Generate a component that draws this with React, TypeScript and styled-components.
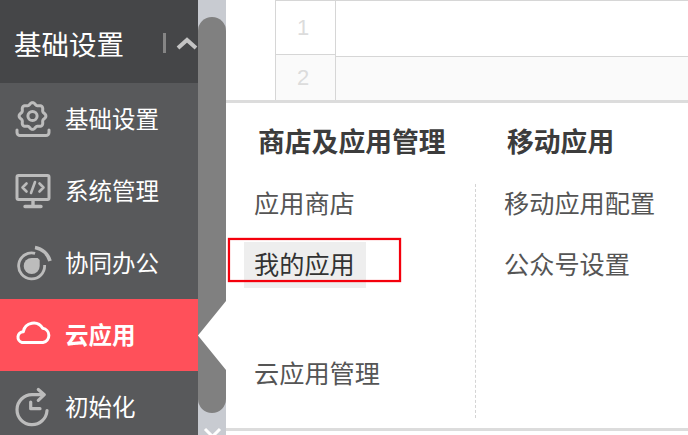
import React from 'react';
import styled, { createGlobalStyle } from 'styled-components';

const Global = createGlobalStyle`
  html, body { margin: 0; padding: 0; background: #fff; }
  body { font-family: "Noto Sans CJK SC", "Noto Sans", sans-serif; }
`;

const Page = styled.div`
  width: 688px;
  height: 435px;
  display: flex;
  overflow: hidden;
  background: #fff;
`;

const Sidebar = styled.aside`
  width: 198px;
  flex: none;
  background: #58595b;
  overflow: hidden;
`;

const SideHeader = styled.header`
  height: 83px;
  display: flex;
  align-items: center;
  padding: 3px 0 0 14px;
  box-sizing: border-box;
  background: #454648;
  color: #fff;
`;

const SideTitle = styled.div`
  font-size: 27.5px;
  line-height: 36px;
  margin-right: auto;
`;

const HeaderDivider = styled.span`
  width: 3px;
  height: 20px;
  background: #858585;
  margin-right: 10px;
`;

const Chevron = styled.svg`
  width: 22px;
  height: 14px;
  flex: none;
`;

const NavItem = styled.div<{ $active?: boolean }>`
  height: 72px;
  display: flex;
  align-items: center;
  gap: 14px;
  padding-left: 15px;
  box-sizing: border-box;
  background: ${(p) => (p.$active ? '#ff505a' : 'transparent')};
  color: #fff;
  font-size: 23.5px;
  font-weight: ${(p) => (p.$active ? 700 : 400)};
  svg { width: 36px; height: 36px; flex: none; overflow: visible; }
`;

const NavLabel = styled.span`
  padding-bottom: 3px;
`;

const Strip = styled.div`
  position: relative;
  width: 28px;
  flex: none;
  background: #c8cbd1;
  display: flex;
  flex-direction: column;
  align-items: center;
`;

const Thumb = styled.div`
  width: 28px;
  height: 396px;
  margin-top: 17px;
  border-radius: 14px;
  background: #808080;
  flex: none;
`;

const CloseMark = styled.svg`
  width: 19px;
  height: 19px;
  margin-top: 14px;
  flex: none;
`;

const Notch = styled.div`
  position: absolute;
  left: 0;
  top: 301px;
  width: 28px;
  height: 69px;
  background: #fff;
  clip-path: polygon(100% 0, 0 50%, 100% 100%);
`;

const Main = styled.main`
  position: relative;
  flex: 1;
  min-width: 0;
  display: flex;
  flex-direction: column;
`;

const TableArea = styled.section`
  height: 103px;
  flex: none;
  box-sizing: border-box;
  padding-left: 49px;
  border-bottom: 3px solid #dcdcdc;
  display: flex;
  overflow: hidden;
`;

const NumberColumn = styled.div`
  width: 61px;
  flex: none;
  box-sizing: border-box;
  border: solid #d6d6d6;
  border-width: 1px 1px 0 1px;
`;

const NumberCell = styled.div<{ $shaded?: boolean }>`
  height: ${(p) => (p.$shaded ? 46 : 53)}px;
  display: flex;
  align-items: center;
  justify-content: center;
  padding-right: 5px;
  font: 22px "Liberation Sans", Arial, sans-serif;
  color: #dcdcdc;
  background: ${(p) => (p.$shaded ? '#fafafa' : '#fff')};
  border-bottom: ${(p) => (p.$shaded ? 'none' : '1px solid #d6d6d6')};
`;

const ContentColumn = styled.div`
  flex: 1;
  border-top: 1px solid #d6d6d6;
`;

const ContentCell = styled.div<{ $shaded?: boolean }>`
  height: ${(p) => (p.$shaded ? 46 : 55)}px;
  background: ${(p) => (p.$shaded ? '#fafafa' : '#fff')};
  border-bottom: ${(p) => (p.$shaded ? 'none' : '1px solid #d6d6d6')};
`;

const Panel = styled.section`
  height: 325px;
  flex: none;
  display: flex;
  border-bottom: 3px solid #dcdcdc;
`;

const MenuColumn = styled.div<{ $width?: number }>`
  ${(p) => (p.$width ? `width: ${p.$width}px; flex: none;` : 'flex: 1;')}
  display: flex;
  flex-direction: column;
`;

const MenuHeading = styled.h3<{ $indent: number }>`
  margin: 18px 0 23px;
  padding-left: ${(p) => p.$indent}px;
  font-size: 26.8px;
  line-height: 40px;
  font-weight: 700;
  color: #3c3c3c;
`;

const MenuBody = styled.div<{ $divider?: boolean }>`
  height: 234px;
  display: flex;
  flex-direction: column;
  align-items: flex-start;
  gap: 21px;
  border-left: 1px ${(p) => (p.$divider ? 'dashed #d4d4d4' : 'solid transparent')};
`;

const MenuItem = styled.div<{ $selected?: boolean; $indent: number; $pushed?: boolean }>`
  font-size: 25.2px;
  line-height: 36px;
  padding-bottom: 4px;
  white-space: nowrap;
  color: ${(p) => (p.$selected ? '#333' : '#555')};
  margin-top: ${(p) => (p.$pushed ? '48px' : '0')};
  ${(p) =>
    p.$selected
      ? `background: #eee; padding: 3px 11px 7px 10px; margin-top: -3px; margin-bottom: -3px; margin-left: ${p.$indent - 10}px;`
      : `margin-left: ${p.$indent}px;`}
`;

const Callout = styled.div`
  position: absolute;
  left: 2px;
  top: 238px;
  width: 173px;
  height: 44px;
  box-sizing: border-box;
  border: 2px solid #f4000c;
  box-shadow: 0 0 1px #f4000c, inset 0 0 1px #f4000c;
`;

const ICON = '#bcbcbc';

const gearOutline = Array.from({ length: 96 }, (_, i) => {
  const t = (i / 96) * Math.PI * 2;
  const r = 12.3 + 1.1 * Math.cos(8 * t);
  return `${i === 0 ? 'M' : 'L'}${(17.5 + r * Math.sin(t)).toFixed(2)} ${(15 - r * Math.cos(t)).toFixed(2)}`;
}).join(' ') + 'Z';

const GearIcon = () => (
  <svg viewBox="0 0 36 36" fill="none" stroke={ICON} strokeWidth="3" strokeLinecap="round" strokeLinejoin="round">
    <path d={gearOutline} />
    <circle cx="17.5" cy="15" r="4.6" />
    <path d="M2 29v2.500a3 3 0 0 0 3 3h26a3 3 0 0 0 3-3V29" />
  </svg>
);

const CodeIcon = () => (
  <svg viewBox="0 0 36 36" fill="none" stroke={ICON} strokeWidth="3" strokeLinecap="round" strokeLinejoin="round">
    <rect x="2" y="2.500" width="32" height="24" rx="1.500" />
    <path d="M18 27v6M10 33.500h16" strokeWidth="3.400" />
    <path d="M11.500 10.500L7.500 14.500l4 4M24.500 10.500l4 4-4 4M20 9l-4 11" strokeWidth="2.600" />
  </svg>
);

const OrbitIcon = () => (
  <svg viewBox="0 0 36 36" fill="none" stroke={ICON}>
    <path d="M29.600 20A13 13 0 1 1 20.100 8.400" strokeWidth="2.800" />
    <path d="M20 2.500A18.500 18.500 0 0 1 35 16" strokeWidth="3.600" />
    <path d="M16.700 13h6l2 2v6a8 8 0 1 1-8-8z" fill={ICON} stroke="none" />
  </svg>
);

const CloudIcon = () => (
  <svg viewBox="0 0 36 36" fill="none" stroke="#fff" strokeWidth="3" strokeLinejoin="round">
    <path d="M7 25.500H28A7.200 7.200 0 0 0 27.700 11.300A10.500 10.500 0 0 0 8.300 14.700 5.500 5.500 0 0 0 7 25.500Z" />
  </svg>
);

const RefreshIcon = () => (
  <svg viewBox="0 0 36 36" fill="none" stroke={ICON} strokeWidth="3.200" strokeLinecap="round" strokeLinejoin="round">
    <path d="M28 5.700H17A15 15 0 1 0 32 21.500" />
    <path d="M23.300.5l6 5.200-6 5.600" />
    <path d="M15.700 13v6.700H25" />
  </svg>
);

const nav = [
  { label: '基础设置', icon: <GearIcon /> },
  { label: '系统管理', icon: <CodeIcon /> },
  { label: '协同办公', icon: <OrbitIcon /> },
  { label: '云应用', icon: <CloudIcon />, active: true },
  { label: '初始化', icon: <RefreshIcon /> },
];

export default function App() {
  return (
    <Page>
      <Global />
      <Sidebar>
        <SideHeader>
          <SideTitle>基础设置</SideTitle>
          <HeaderDivider />
          <Chevron viewBox="0 0 22 14" fill="none" stroke="#c4c4c4" strokeWidth="4">
            <path d="M2 12l9-8 9 8" />
          </Chevron>
        </SideHeader>
        {nav.map((n) => (
          <NavItem key={n.label} $active={n.active}>
            {n.icon}
            <NavLabel>{n.label}</NavLabel>
          </NavItem>
        ))}
      </Sidebar>
      <Strip>
        <Thumb />
        <CloseMark viewBox="0 0 19 19" stroke="#fff" strokeWidth="3" fill="none">
          <path d="M2 2l15 15M17 2L2 17" />
        </CloseMark>
        <Notch />
      </Strip>
      <Main>
        <TableArea>
          <NumberColumn>
            <NumberCell>1</NumberCell>
            <NumberCell $shaded>2</NumberCell>
          </NumberColumn>
          <ContentColumn>
            <ContentCell />
            <ContentCell $shaded />
          </ContentColumn>
        </TableArea>
        <Panel>
          <MenuColumn $width={249}>
            <MenuHeading $indent={32}>商店及应用管理</MenuHeading>
            <MenuBody>
              <MenuItem $indent={27}>应用商店</MenuItem>
              <MenuItem $indent={27} $selected>我的应用</MenuItem>
              <MenuItem $indent={27} $pushed>云应用管理</MenuItem>
            </MenuBody>
          </MenuColumn>
          <MenuColumn>
            <MenuHeading $indent={32}>移动应用</MenuHeading>
            <MenuBody $divider>
              <MenuItem $indent={28}>移动应用配置</MenuItem>
              <MenuItem $indent={28}>公众号设置</MenuItem>
            </MenuBody>
          </MenuColumn>
        </Panel>
        <Callout />
      </Main>
    </Page>
  );
}
